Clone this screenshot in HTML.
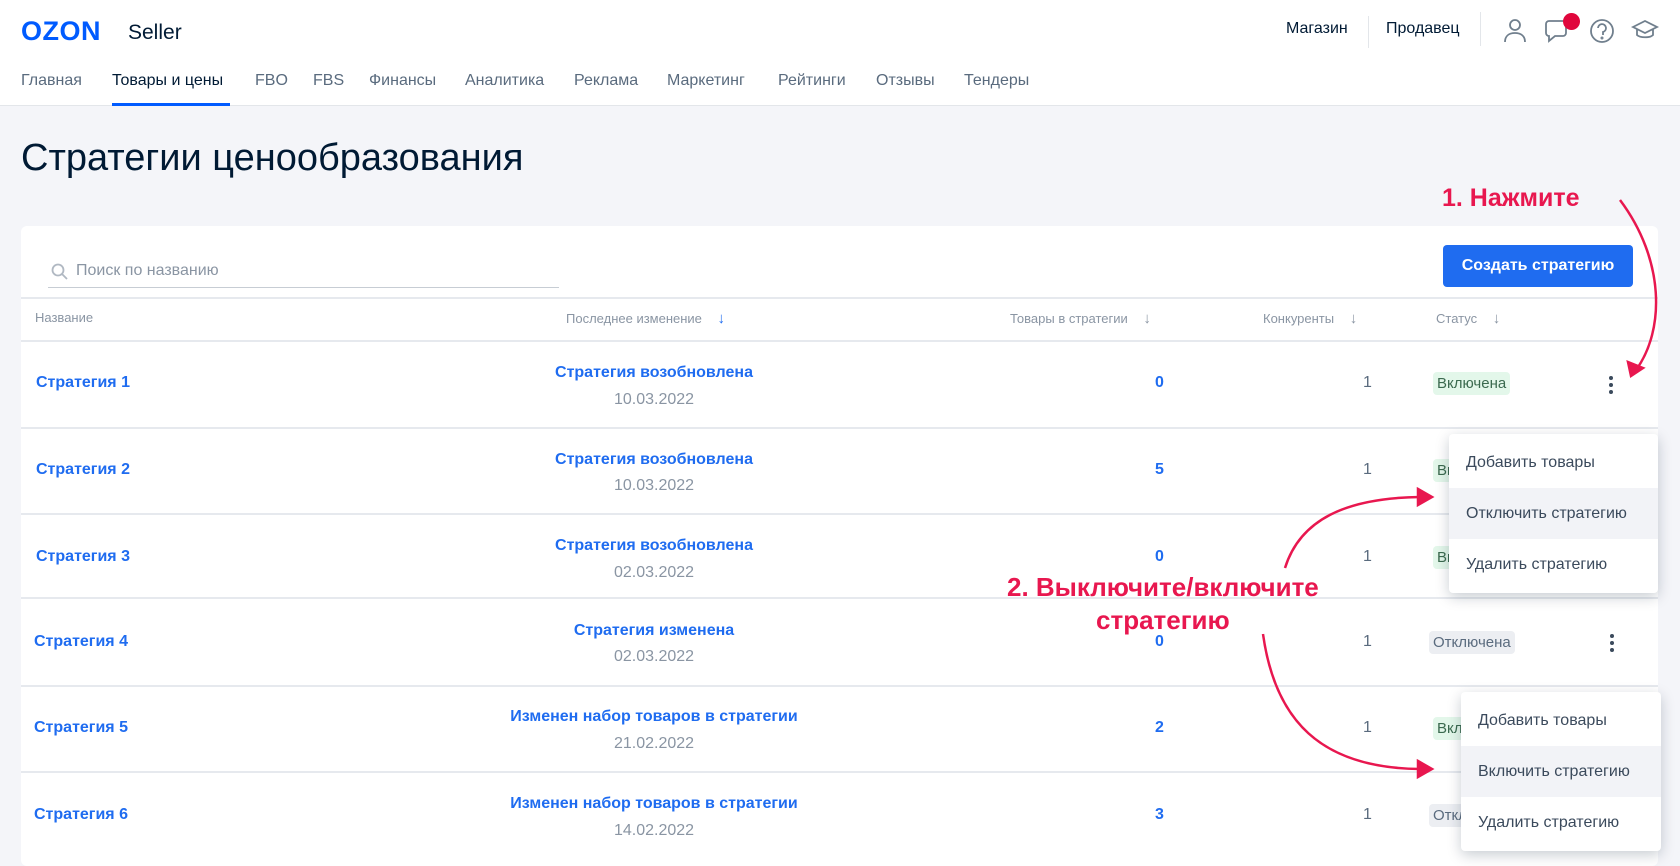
<!DOCTYPE html>
<html><head><meta charset="utf-8"><style>
*{margin:0;padding:0;box-sizing:border-box}
body{width:1680px;height:854px;overflow:hidden;background:#f4f5f9;font-family:"Liberation Sans",sans-serif;position:relative;color:#001a34}
.a{position:absolute;white-space:nowrap}
.hdr{position:absolute;left:0;top:0;width:1680px;height:106px;background:#fff;border-bottom:1px solid #e3e6ea}
.nav{font-size:16px;color:#5a6b7e;top:72px}
.card{position:absolute;left:21px;top:226px;width:1637px;height:640px;background:#fff;border-radius:6px}
.line{position:absolute;left:21px;width:1637px;height:2px;background:#e6e9ee}
.th{font-size:13px;color:#8a95a3}
.lnk{color:#1f6cf0;font-weight:bold;font-size:16px}
.date{color:#8a95a3;font-size:16px}
.num{font-size:16px;color:#5a6b7e}
.tag{font-size:15px;padding:3px 4px;border-radius:4px}
.on{background:#e3f7ea;color:#3b6a4f}
.off{background:#eceef2;color:#5a6b7e}
.menu{position:absolute;background:#fff;border-radius:4px;box-shadow:0 4px 14px rgba(0,26,52,.22)}
.menu div{height:51px;line-height:51px;padding-left:17px;font-size:16px;color:#3b4a5c}
.menu div.h{background:#f2f3f7}
.red{color:#e8174f;font-weight:bold;font-size:25px}
.dots{position:absolute;width:4px}
.dots i{display:block;width:4px;height:4px;border-radius:2px;background:#3b4a5c;margin-bottom:3px}
</style></head><body>
<div class="hdr"></div>
<div class="a" style="left:21px;top:16px;font-size:27px;font-weight:900;color:#005bff;letter-spacing:0.5px">OZON</div>
<div class="a" style="left:128px;top:21px;font-size:21px;color:#001a34">Seller</div>
<div class="a" style="left:1286px;top:20px;font-size:16px;color:#001a34">Магазин</div>
<div class="a" style="left:1368px;top:16px;width:1px;height:32px;background:#e3e6ea"></div>
<div class="a" style="left:1386px;top:20px;font-size:16px;color:#001a34">Продавец</div>
<div class="a" style="left:1480px;top:12px;width:1px;height:34px;background:#e3e6ea"></div>
<svg class="a" style="left:1500px;top:16px" width="180" height="30" viewBox="0 0 180 30" fill="none" stroke="#707f8d" stroke-width="1.8">
<circle cx="15" cy="9" r="5"/><path d="M5 26c0-6 4-9 10-9s10 3 10 9"/>
<path d="M49 5h14a3 3 0 0 1 3 3v9a3 3 0 0 1-3 3h-8l-6 5v-5a3 3 0 0 1-3-3V8a3 3 0 0 1 3-3z"/>
<circle cx="102" cy="15" r="11"/><path d="M98 12a4 4 0 1 1 5 4v3"/><circle cx="102" cy="22" r=".6"/>
<path d="M133 11l12-6 12 6-12 6z M137 13v6c3 3 13 3 16 0v-6"/>
</svg>
<div class="a" style="left:1563px;top:13px;width:17px;height:17px;border-radius:50%;background:#e0063c"></div>
<div class="a nav" style="left:21px">Главная</div>
<div class="a nav" style="left:112px;color:#001a34">Товары и цены</div>
<div class="a" style="left:112px;top:103px;width:118px;height:3px;background:#005bff"></div>
<div class="a nav" style="left:255px">FBO</div>
<div class="a nav" style="left:313px">FBS</div>
<div class="a nav" style="left:369px">Финансы</div>
<div class="a nav" style="left:465px">Аналитика</div>
<div class="a nav" style="left:574px">Реклама</div>
<div class="a nav" style="left:667px">Маркетинг</div>
<div class="a nav" style="left:778px">Рейтинги</div>
<div class="a nav" style="left:876px">Отзывы</div>
<div class="a nav" style="left:964px">Тендеры</div>
<div class="a" style="left:21px;top:137px;font-size:38px;color:#001a34">Стратегии ценообразования</div>
<div class="card"></div>
<svg class="a" style="left:51px;top:263px" width="18" height="18" fill="none" stroke="#b0b8c2" stroke-width="1.8"><circle cx="7" cy="7" r="5.5"/><path d="M11 11l5 5"/></svg>
<div class="a" style="left:76px;top:262px;font-size:16px;color:#8a95a3">Поиск по названию</div>
<div class="a" style="left:48px;top:287px;width:511px;height:1px;background:#c7cdd4"></div>
<div class="a" style="left:1443px;top:245px;width:190px;height:42px;background:#1f6cf0;border-radius:4px;color:#fff;font-weight:bold;font-size:16px;line-height:42px;text-align:center">Создать стратегию</div>
<div class="line" style="top:297px"></div>
<div class="a th" style="left:35px;top:310px">Название</div>
<div class="a th" style="left:566px;top:310px">Последнее изменение <span style="color:#1f6cf0;margin-left:12px;font-size:15px">↓</span></div>
<div class="a th" style="left:1010px;top:310px">Товары в стратегии <span style="margin-left:12px;font-size:15px">↓</span></div>
<div class="a th" style="left:1263px;top:310px">Конкуренты <span style="margin-left:12px;font-size:15px">↓</span></div>
<div class="a th" style="left:1436px;top:310px">Статус <span style="margin-left:12px;font-size:15px">↓</span></div>
<div class="line" style="top:340px"></div>
<div class="line" style="top:427px"></div>
<div class="line" style="top:513px"></div>
<div class="line" style="top:597px"></div>
<div class="line" style="top:685px"></div>
<div class="line" style="top:771px"></div>

<div class="a lnk" style="left:36px;top:374px">Стратегия 1</div>
<div class="a lnk" style="left:454px;width:400px;text-align:center;top:364px">Стратегия возобновлена</div>
<div class="a date" style="left:454px;width:400px;text-align:center;top:391px">10.03.2022</div>
<div class="a lnk" style="left:1155px;top:374px">0</div>
<div class="a num" style="left:1363px;top:374px">1</div>
<div class="a tag on" style="left:1433px;top:372px">Включена</div>
<div class="dots" style="left:1609px;top:376px"><i></i><i></i><i></i></div>

<div class="a lnk" style="left:36px;top:461px">Стратегия 2</div>
<div class="a lnk" style="left:454px;width:400px;text-align:center;top:451px">Стратегия возобновлена</div>
<div class="a date" style="left:454px;width:400px;text-align:center;top:477px">10.03.2022</div>
<div class="a lnk" style="left:1155px;top:461px">5</div>
<div class="a num" style="left:1363px;top:461px">1</div>
<div class="a tag on" style="left:1433px;top:459px">Включена</div>

<div class="a lnk" style="left:36px;top:548px">Стратегия 3</div>
<div class="a lnk" style="left:454px;width:400px;text-align:center;top:537px">Стратегия возобновлена</div>
<div class="a date" style="left:454px;width:400px;text-align:center;top:564px">02.03.2022</div>
<div class="a lnk" style="left:1155px;top:548px">0</div>
<div class="a num" style="left:1363px;top:548px">1</div>
<div class="a tag on" style="left:1433px;top:546px">Включена</div>

<div class="a lnk" style="left:34px;top:633px">Стратегия 4</div>
<div class="a lnk" style="left:454px;width:400px;text-align:center;top:622px">Стратегия изменена</div>
<div class="a date" style="left:454px;width:400px;text-align:center;top:648px">02.03.2022</div>
<div class="a lnk" style="left:1155px;top:633px">0</div>
<div class="a num" style="left:1363px;top:633px">1</div>
<div class="a tag off" style="left:1429px;top:631px">Отключена</div>
<div class="dots" style="left:1610px;top:634px"><i></i><i></i><i></i></div>

<div class="a lnk" style="left:34px;top:719px">Стратегия 5</div>
<div class="a lnk" style="left:454px;width:400px;text-align:center;top:708px">Изменен набор товаров в стратегии</div>
<div class="a date" style="left:454px;width:400px;text-align:center;top:735px">21.02.2022</div>
<div class="a lnk" style="left:1155px;top:719px">2</div>
<div class="a num" style="left:1363px;top:719px">1</div>
<div class="a tag on" style="left:1433px;top:717px">Включена</div>

<div class="a lnk" style="left:34px;top:806px">Стратегия 6</div>
<div class="a lnk" style="left:454px;width:400px;text-align:center;top:795px">Изменен набор товаров в стратегии</div>
<div class="a date" style="left:454px;width:400px;text-align:center;top:822px">14.02.2022</div>
<div class="a lnk" style="left:1155px;top:806px">3</div>
<div class="a num" style="left:1363px;top:806px">1</div>
<div class="a tag off" style="left:1429px;top:804px">Отключена</div>

<div class="menu" style="left:1449px;top:434px;width:209px;padding:3px 0">
<div>Добавить товары</div><div class="h">Отключить стратегию</div><div>Удалить стратегию</div></div>
<div class="menu" style="left:1461px;top:692px;width:200px;padding:3px 0">
<div>Добавить товары</div><div class="h">Включить стратегию</div><div>Удалить стратегию</div></div>

<div class="a red" style="left:1442px;top:184px">1. Нажмите</div>
<div class="a red" style="left:1007px;top:572px;font-size:26px">2. Выключите/включите</div>
<div class="a red" style="left:1096px;top:605px;font-size:26px">стратегию</div>
<svg class="a" style="left:0;top:0" width="1680" height="854" fill="none" stroke="#e8174f" stroke-width="2.5">
<path d="M1620 200C1665 260 1665 330 1636 370"/>
<path d="M1628 362l3 14 12-8z" fill="#e8174f"/>
<path d="M1285 568C1300 520 1345 498 1420 497"/>
<path d="M1418 489l14 8-14 8z" fill="#e8174f"/>
<path d="M1263 634C1275 720 1320 768 1420 769"/>
<path d="M1418 761l14 8-14 8z" fill="#e8174f"/>
</svg>
</body></html>
